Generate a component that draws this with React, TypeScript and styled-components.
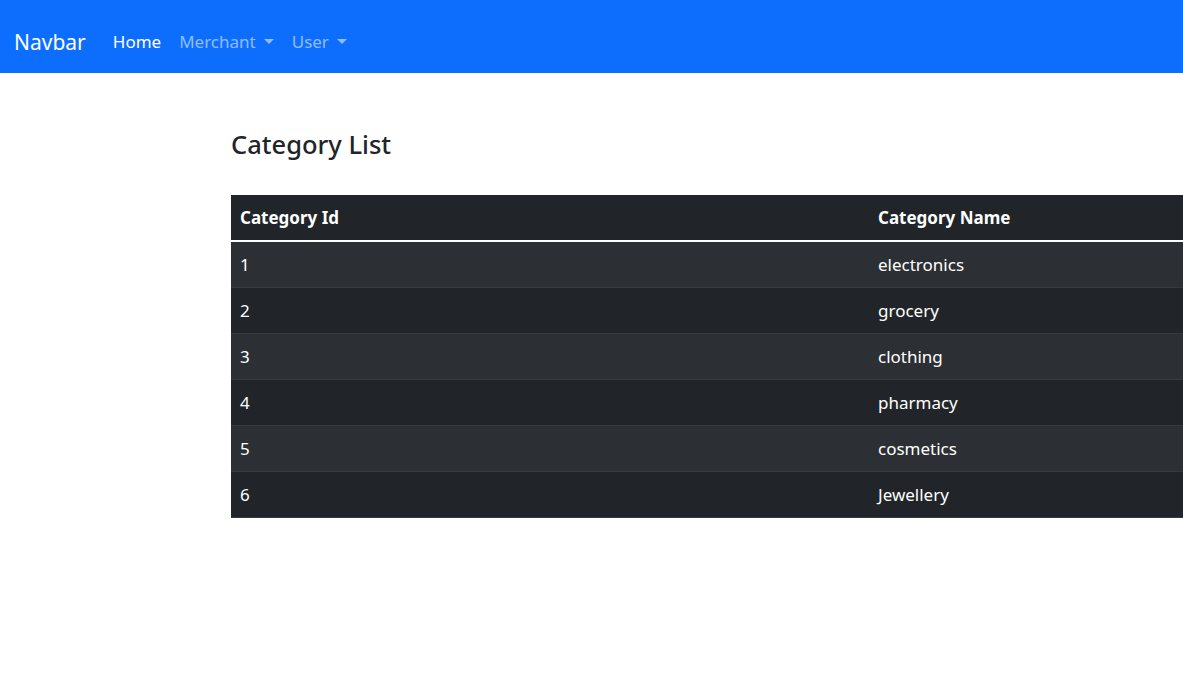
import React from "react";
import styled, { createGlobalStyle } from "styled-components";

const GlobalStyle = createGlobalStyle`
  html, body {
    margin: 0;
    padding: 0;
    background: #ffffff;
  }
  body {
    font-family: "Noto Sans", "Liberation Sans", sans-serif;
    color: #212529;
  }
`;

const NavBar = styled.nav`
  height: 73px;
  box-sizing: border-box;
  padding: 10px 0 0 14px;
  background-color: #0d6efd;
  display: flex;
  align-items: center;
`;

const Brand = styled.a`
  color: #ffffff;
  font-size: 21px;
  margin-right: 18px;
  text-decoration: none;
`;

const NavList = styled.ul`
  display: flex;
  list-style: none;
  margin: 0;
  padding: 0;
`;

const NavLink = styled.a<{ $active?: boolean }>`
  display: flex;
  align-items: center;
  padding: 0 9px;
  font-size: 17px;
  color: ${(p) => (p.$active ? "#ffffff" : "rgba(255, 255, 255, 0.55)")};
  text-decoration: none;
`;

const Caret = styled.span`
  display: inline-block;
  margin-left: 8px;
  border-top: 5px solid currentColor;
  border-left: 5px solid transparent;
  border-right: 5px solid transparent;
`;

const Main = styled.main`
  padding: 54px 0 0 231px;
`;

const Heading = styled.h3`
  margin: 0 0 34px;
  font-size: 25.5px;
  font-weight: 500;
  line-height: 34px;
`;

const Table = styled.table`
  width: 100%;
  border-collapse: collapse;
  color: #ffffff;
  font-size: 17px;
`;

const HeadRow = styled.tr`
  background: #212529;
  border-bottom: 2px solid #ffffff;
`;

const HeadCell = styled.th<{ $width?: number }>`
  text-align: left;
  font-weight: 700;
  height: 46px;
  padding: 0 9px;
  width: ${(p) => (p.$width ? `${p.$width}px` : "auto")};
  box-sizing: border-box;
`;

const BodyRow = styled.tr<{ $striped: boolean }>`
  background: ${(p) => (p.$striped ? "#2c3034" : "#212529")};
  border-bottom: 1px solid #373b3e;
`;

const Cell = styled.td`
  height: 45px;
  padding: 0 9px;
`;

const categories = [
  { id: 1, name: "electronics" },
  { id: 2, name: "grocery" },
  { id: 3, name: "clothing" },
  { id: 4, name: "pharmacy" },
  { id: 5, name: "cosmetics" },
  { id: 6, name: "Jewellery" },
];

const App = () => {
  return (
    <>
      <GlobalStyle />
      <NavBar>
        <Brand href="#">Navbar</Brand>
        <NavList>
          <li>
            <NavLink $active href="#">Home</NavLink>
          </li>
          <li>
            <NavLink href="#">
              Merchant
              <Caret />
            </NavLink>
          </li>
          <li>
            <NavLink href="#">
              User
              <Caret />
            </NavLink>
          </li>
        </NavList>
      </NavBar>
      <Main>
        <Heading>Category List</Heading>
        <Table>
          <thead>
            <HeadRow>
              <HeadCell $width={638}>Category Id</HeadCell>
              <HeadCell>Category Name</HeadCell>
            </HeadRow>
          </thead>
          <tbody>
            {categories.map((c, i) => (
              <BodyRow key={c.id} $striped={i % 2 === 0}>
                <Cell>{c.id}</Cell>
                <Cell>{c.name}</Cell>
              </BodyRow>
            ))}
          </tbody>
        </Table>
      </Main>
    </>
  );
};

export default App;
